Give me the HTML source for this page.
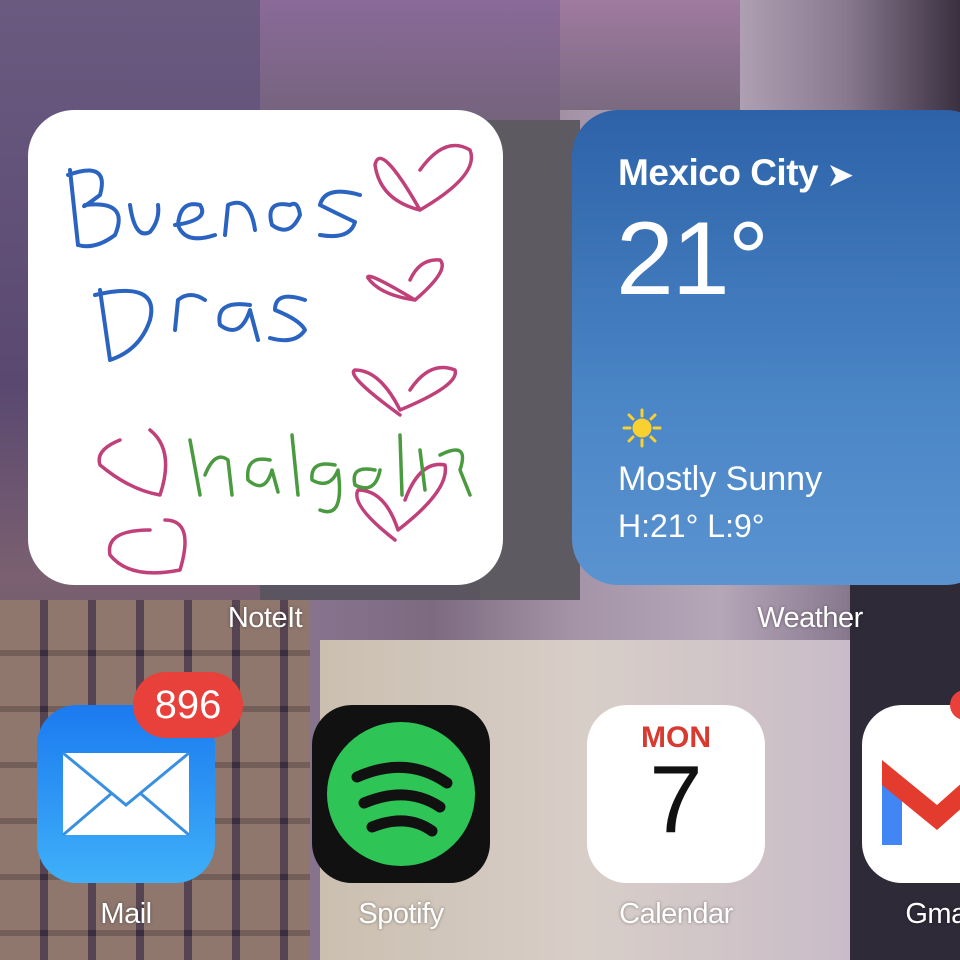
<!DOCTYPE html>
<html><head><meta charset="utf-8"><style>
*{margin:0;padding:0;box-sizing:border-box}
body{width:960px;height:960px;overflow:hidden;position:relative;font-family:"Liberation Sans",sans-serif;
background:linear-gradient(90deg,#4a3a5e 0%,#6b5478 15%,#8a7590 30%,#7d6a80 45%,#a594a8 60%,#b5a6b8 75%,#8a7a90 88%,#3a3040 100%);}
.bg{position:absolute}
.lab{position:absolute;color:#fff;font-size:29px;text-align:center;width:200px;text-shadow:0 0 3px rgba(0,0,0,.4);letter-spacing:-0.5px}
.ico{position:absolute;width:178px;height:178px;border-radius:40px;overflow:hidden}
</style></head><body>
<div class="bg" style="left:0;top:0;width:260px;height:960px;background:linear-gradient(180deg,#6a5a80,#5a4870 40%,#7a6070 60%,#5a4a5a)"></div>
<div class="bg" style="left:0;top:600px;width:310px;height:360px;background:repeating-linear-gradient(90deg,rgba(255,220,150,.25) 0 40px,rgba(40,30,50,.3) 40px 48px),repeating-linear-gradient(180deg,rgba(0,0,0,0) 0 50px,rgba(30,20,40,.5) 50px 56px),#6a5560"></div>
<div class="bg" style="left:260px;top:0;width:300px;height:600px;background:linear-gradient(180deg,#8a6a98,#6a6070 30%,#5a5560)"></div>
<div class="bg" style="left:480px;top:120px;width:100px;height:480px;background:#5e5a62"></div>
<div class="bg" style="left:320px;top:640px;width:530px;height:320px;background:linear-gradient(90deg,#cbbfb0,#d8cec8 50%,#c9bcc8)"></div>
<div class="bg" style="left:850px;top:580px;width:110px;height:380px;background:#2e2a38"></div>
<div class="bg" style="left:560px;top:0;width:180px;height:110px;background:linear-gradient(180deg,#a07aa0,#7a6a80)"></div>

<div style="position:absolute;left:28px;top:110px;width:475px;height:475px;background:#fff;border-radius:46px;overflow:hidden">
<svg width="475" height="475" viewBox="28 110 475 475" fill="none" stroke-linecap="round" stroke-linejoin="round">
<g stroke="#2a63c0" stroke-width="4">
<path d="M70 170 L78 245 M68 175 Q110 160 100 195 Q80 210 85 205 Q130 200 115 235 Q95 250 78 245"/>
<path d="M130 205 Q135 240 150 232 Q160 220 158 205"/>
<path d="M175 225 Q210 220 200 205 Q180 200 178 225 Q185 245 215 235"/>
<path d="M225 235 L228 205 Q250 195 255 230"/>
<path d="M290 205 Q265 200 272 225 Q290 238 300 215 Q298 200 290 205"/>
<path d="M360 195 Q325 185 320 205 Q340 215 355 222 Q350 240 320 235"/>
<path d="M100 290 L110 360 M95 295 Q160 280 150 320 Q140 350 110 360"/>
<path d="M175 330 L178 300 Q190 290 205 300"/>
<path d="M250 305 Q215 300 220 325 Q240 340 250 310 L258 340"/>
<path d="M305 300 Q275 290 275 310 Q300 320 305 330 Q295 345 270 338"/>
</g>
<g stroke="#c0407a" stroke-width="3.5">
<path d="M420 210 Q380 140 375 165 Q380 200 420 210 Q480 175 470 150 Q445 135 420 170"/>
<path d="M415 300 Q365 270 368 278 Q380 295 415 300 Q450 270 440 260 Q420 258 410 280"/>
<path d="M400 415 Q345 375 355 370 Q380 370 400 410 Q460 385 455 370 Q430 360 410 390"/>
<path d="M395 540 Q350 505 358 490 Q385 490 398 530 Q450 490 445 465 Q420 460 405 500"/>
<path d="M120 440 Q95 450 100 465 Q130 490 160 495 Q175 450 150 430"/>
<path d="M150 530 Q105 530 110 555 Q130 580 180 570 Q195 520 165 520"/>
</g>
<g stroke="#4a9a40" stroke-width="3.5">
<path d="M190 440 L200 495 M205 475 Q215 450 228 460 L232 495"/>
<path d="M270 460 Q245 455 248 480 Q265 495 272 470 L278 492"/>
<path d="M292 435 L298 495"/>
<path d="M335 465 Q310 460 312 480 Q330 490 338 470 Q345 520 320 510"/>
<path d="M375 470 Q350 465 355 485 Q375 495 380 470"/>
<path d="M400 435 L402 495 M420 450 L425 490 M440 455 Q470 440 460 470 L470 495"/>
</g>
</svg>
</div>

<div style="position:absolute;left:572px;top:110px;width:420px;height:475px;border-radius:46px;background:linear-gradient(180deg,#2d62a8,#4a85c6 60%,#5a93d0);color:#fff">
<div style="position:absolute;left:46px;top:42px;font-size:37px;font-weight:bold;letter-spacing:-0.5px">Mexico City <span style="font-size:30px">&#10148;</span></div>
<div style="position:absolute;left:44px;top:90px;font-size:104px;font-weight:300;letter-spacing:-2px">21°</div>
<div style="position:absolute;left:48px;top:296px;width:44px;height:44px">
<svg width="44" height="44" viewBox="0 0 44 44" stroke="#f8d030" stroke-width="3" stroke-linecap="round"><circle cx="22" cy="22" r="8" fill="#f8d030"/><path d="M22 4v6M22 34v6M4 22h6M34 22h6M9 9l4 4M31 31l4 4M9 35l4-4M31 13l4-4"/></svg></div>
<div style="position:absolute;left:46px;top:350px;font-size:34px">Mostly Sunny</div>
<div style="position:absolute;left:46px;top:398px;font-size:32px">H:21° L:9°</div>
</div>

<div class="lab" style="left:165px;top:602px">NoteIt</div>
<div class="lab" style="left:710px;top:602px">Weather</div>

<div class="ico" style="left:37px;top:705px;background:linear-gradient(180deg,#1b7af0,#3fb0f8)">
<svg width="178" height="178"><rect x="26" y="48" width="126" height="82" fill="#fff"/><path d="M26 48 L89 100 L152 48 M26 130 L75 88 M152 130 L103 88" stroke="#3a90e0" stroke-width="3" fill="none"/></svg></div>
<div style="position:absolute;left:133px;top:672px;width:110px;height:66px;border-radius:33px;background:#e8403a;color:#fff;font-size:40px;text-align:center;line-height:66px">896</div>
<div class="lab" style="left:26px;top:898px">Mail</div>

<div class="ico" style="left:312px;top:705px;background:#111">
<svg width="178" height="178"><ellipse cx="89" cy="89" rx="74" ry="72" fill="#2fc556"/><g stroke="#111" stroke-width="11" fill="none" stroke-linecap="round"><path d="M45 72 Q95 50 135 78"/><path d="M52 98 Q95 80 128 102"/><path d="M60 122 Q95 108 120 126"/></g></svg></div>
<div class="lab" style="left:301px;top:898px">Spotify</div>

<div class="ico" style="left:587px;top:705px;background:#fff;text-align:center">
<div style="color:#d93a30;font-size:30px;margin-top:16px;font-weight:bold">MON</div>
<div style="color:#111;font-size:96px;line-height:90px;font-weight:300">7</div></div>
<div class="lab" style="left:576px;top:898px">Calendar</div>

<div class="ico" style="left:862px;top:705px;background:#fff">
<svg width="178" height="178"><path d="M20 70 L20 140 L40 140 L40 85 Z" fill="#4285f4"/><path d="M20 55 L75 100 L120 60 L120 85 L75 125 L20 80Z" fill="#e33b2e"/></svg></div>
<div style="position:absolute;left:950px;top:690px;width:30px;height:30px;border-radius:50%;background:#e8403a"></div>
<div class="lab" style="left:842px;top:898px">Gmail</div>
</body></html>
